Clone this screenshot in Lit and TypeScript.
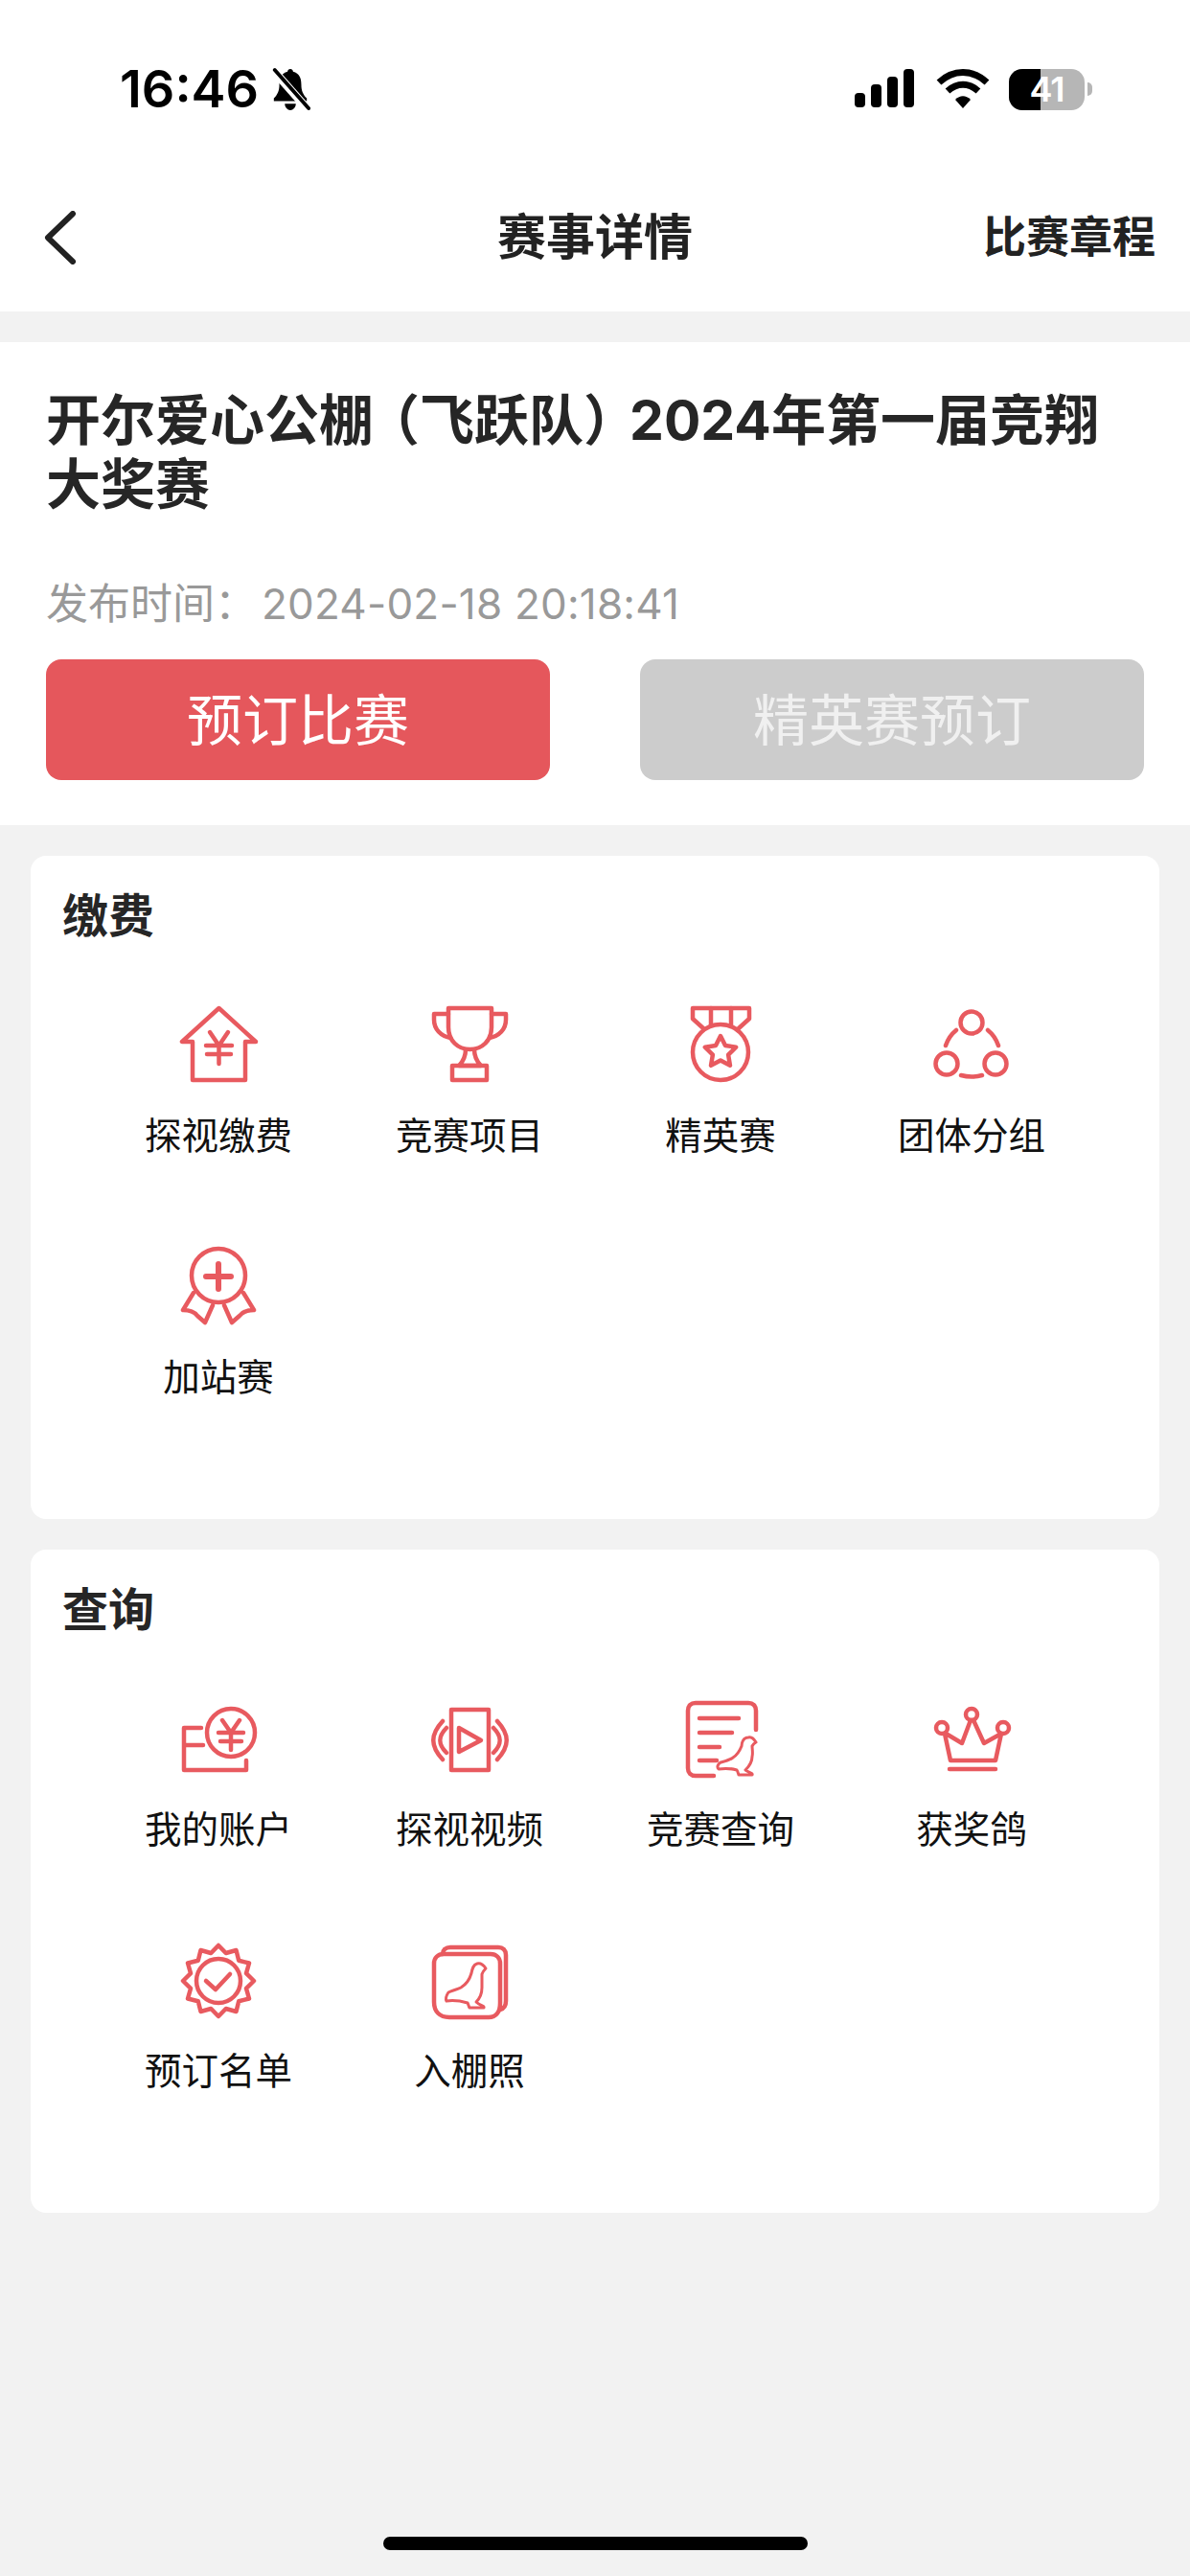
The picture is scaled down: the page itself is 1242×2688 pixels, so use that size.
import { LitElement, html, css, svg } from "lit";
import { customElement } from "lit/decorators.js";

const pigeonDoc = "M79 46C77 43 75 40 71 41C66 41 64 46 64 50C62 55 60 59 55 62C51 65 46 66 42 67C39 69 38 72 40 74C46 73 52 73 59 75C60 76 60 78 61 80H75C76 78 72 78 68 75C72 71 75 66 75 61C76 57 75 53 75 50C76 48 77 47 79 46Z";
const pigeonPhoto = "M59 30C57 27 54 24 50 25C46 26 45 30 44 35C42 42 38 47 33 50C29 52 24 53 20 55C18 58 17 62 18 64C25 63 33 64 40 66C41 68 41 69 42 71H57C58 69 53 69 49 65C53 61 55 55 55 50C55 45 55 40 55 36C56 33 58 31 59 30Z";

function burst(cx: number, cy: number, ro: number, ri: number, n: number, start = -90) {
  const pts: string[] = [];
  for (let i = 0; i < n * 2; i++) {
    const r = i % 2 === 0 ? ro : ri;
    const a = ((start + (i * 180) / n) * Math.PI) / 180;
    pts.push(`${(cx + r * Math.cos(a)).toFixed(1)},${(cy + r * Math.sin(a)).toFixed(1)}`);
  }
  return pts.join(" ");
}

const icons: Record<string, unknown> = {
  house: svg`<path d="M15 39V79H70V39H81L42.500 4 4 39Z"/><path d="M33 29l9.500 14L52 29M29 43H56M30 52H55M42.500 43V62"/>`,
  trophy: svg`<path d="M20 4H65V24C65 38 55 47 42.500 47S20 38 20 24Z"/><path d="M20 10H5V16C5 26 12 33 22 35M65 10H80V16C80 26 73 33 63 35"/><path d="M38 47C38 54 35 60 31 64H54C50 60 47 54 47 47"/><rect x="24" y="64" width="36" height="15"/>`,
  medal: svg`<path d="M24 25L13 15V4H72V15L61 25"/><path d="M32 4V21M53 4V21"/><circle cx="42" cy="50" r="29"/><polygon points="${burst(42, 50, 17, 8.5, 5)}"/>`,
  group: svg`<circle cx="42" cy="19" r="11.500"/><circle cx="16" cy="62" r="11.500"/><circle cx="67" cy="62" r="11.500"/><path d="M26 27C21 31 17 37 15 43M59 27C64 31 68 37 70 43M31 74C38 76 46 76 53 74"/>`,
  award: svg`<circle cx="42" cy="31" r="28"/><path class="thick" d="M42 19V45M29 32H55"/><path d="M16 49L5 67C11 67 17 69 20 73L28 80L36 62M68 49L79 67C73 67 67 69 64 73L56 80L48 62"/>`,
  account: svg`<circle cx="55" cy="36" r="25"/><path d="M46 23L55 36L64 23M42 36H68M44 45H66M55 36V54"/><path d="M24 31H6V75H71V65M6 49H26"/>`,
  video: svg`<rect x="23" y="12" width="39" height="63"/><path d="M31 31L54 44L31 56Z"/><path d="M18 31C9 40 9 48 18 57M14 24C1 38 1 50 14 64M67 31C76 40 76 48 67 57M71 24C84 38 84 50 71 64"/>`,
  doc: svg`<path d="M35 81H16C11 81 8 78 8 73V13C8 8 11 5 16 5H71C76 5 79 8 79 13V33"/><path d="M20 21H61M20 36H54M20 51H41M20 65H38"/><path class="thin" d="${pigeonDoc}"/>`,
  crown: svg`<circle cx="42" cy="17" r="6"/><circle cx="11" cy="31" r="6"/><circle cx="75" cy="31" r="6"/><path d="M14 37L20 65H67L73 37L55 47L44 23H41L32 47L17 38"/><path d="M19 74H67"/>`,
  badge: svg`<polygon points="${burst(42, 43, 37, 30, 12)}"/><circle cx="42" cy="43" r="23"/><path d="M29 43L39 52L54 36"/>`,
  photo: svg`<path d="M5 25C5 19 9 15 15 15H64C70 15 74 19 74 25V66C74 75 70 81 62 81H21C11 81 5 75 5 65Z"/><path d="M14 15C14 11 17 8 22 8H72C77 8 80 11 80 16V64C80 69 78 72 74 73"/><path class="thin" d="${pigeonPhoto}"/>`,
};

type Tile = { icon: string; label: string };
const pay: Tile[] = [
  { icon: "house", label: "探视缴费" },
  { icon: "trophy", label: "竞赛项目" },
  { icon: "medal", label: "精英赛" },
  { icon: "group", label: "团体分组" },
  { icon: "award", label: "加站赛" },
];
const query: Tile[] = [
  { icon: "account", label: "我的账户" },
  { icon: "video", label: "探视视频" },
  { icon: "doc", label: "竞赛查询" },
  { icon: "crown", label: "获奖鸽" },
  { icon: "badge", label: "预订名单" },
  { icon: "photo", label: "入棚照" },
];

@customElement("app-root")
export class AppRoot extends LitElement {
  static styles = css`
    :host {
      display: block;
      position: relative;
      width: 1242px;
      height: 2688px;
      overflow: hidden;
      background: #f2f2f2;
      font-family: "Inter", "Noto Sans CJK SC", sans-serif;
      color: #222;
    }
    .top { background: #fff; height: 325px; display: flex; flex-direction: column; }
    .status {
      height: 165px;
      display: flex;
      justify-content: space-between;
      align-items: flex-start;
      padding: 67px 102px 0 125px;
      box-sizing: border-box;
    }
    .status-left, .status-right { display: flex; align-items: center; height: 52px; }
    .status-left { gap: 12px; }
    .time { font-size: 54px; font-weight: 600; line-height: 52px; color: #000; }
    .status-right { gap: 20px; }
    .status svg { display: block; }
    .status svg.signal { margin-right: 3px; }
    .battery {
      position: relative;
      width: 79px;
      height: 43px;
      border-radius: 14px;
      overflow: hidden;
      background: #b6b6b6;
    }
    .battery-fill { width: 33px; height: 100%; background: #000; }
    .battery-num {
      position: absolute;
      inset: 0;
      display: flex;
      align-items: center;
      justify-content: center;
      color: #fff;
      font-size: 36px;
      font-weight: 600;
      letter-spacing: -1px;
    }
    .battery-wrap { display: flex; align-items: center; gap: 3px; }
    .nub { width: 5px; height: 14px; border-radius: 0 5px 5px 0; background: #b6b6b6; }

    .nav {
      height: 160px;
      box-sizing: border-box;
      display: grid;
      grid-template-columns: 1fr auto 1fr;
      align-items: center;
      padding: 5px 36px 0;
    }
    .nav svg { display: block; margin-left: 10px; fill: none; stroke: #222; stroke-width: 6; stroke-linecap: round; stroke-linejoin: round; }
    .nav-title { font-size: 51px; font-weight: 700; color: #222; line-height: 60px; }
    .nav-link { font-size: 45px; font-weight: 600; justify-self: end; color: #222; line-height: 60px; }

    .hero {
      margin-top: 32px;
      height: 504px;
      box-sizing: border-box;
      background: #fff;
      padding: 48px 48px 0;
    }
    h1 { margin: 0; font-size: 57px; line-height: 67px; font-weight: 700; color: #262626; height: 134px; }
    .paren-l { margin-left: -9px; }
    .paren-r { margin-right: -9px; }
    .meta { margin-top: 58px; font-size: 44px; line-height: 66px; color: #999; height: 66px; }
    .stamp { margin-left: 5px; letter-spacing: 0.2px; }
    .buttons { margin-top: 25px; display: flex; justify-content: space-between; }
    .btn {
      width: 526px;
      height: 126px;
      box-sizing: border-box;
      padding-bottom: 6px;
      border-radius: 16px;
      display: flex;
      align-items: center;
      justify-content: center;
      font-size: 58px;
      color: #fff;
      background: #e5575c;
    }
    .btn.off { background: #cccccc; color: #f0f0f0; }

    .cards { padding: 32px 32px 0; display: flex; flex-direction: column; gap: 32px; }
    .card {
      background: #fff;
      border-radius: 16px;
      height: 692px;
      box-sizing: border-box;
      padding-top: 30px;
    }
    h2 { margin: 0 0 0 33px; font-size: 48px; line-height: 66px; font-weight: 700; color: #262626; }
    .grid {
      margin-top: 59px;
      padding: 0 65px;
      display: grid;
      grid-template-columns: repeat(4, 1fr);
      grid-auto-rows: 252px;
    }
    .tile { display: flex; flex-direction: column; align-items: center; }
    .tile svg {
      width: 84px;
      height: 84px;
      display: block;
      fill: none;
      stroke: #e85a5f;
      stroke-width: 4.500;
      stroke-linecap: round;
      stroke-linejoin: round;
    }
    .tile svg .thin { stroke-width: 3; }
    .tile svg .thick { stroke-width: 6; }
    .tile span { margin-top: 26px; font-size: 38.500px; line-height: 54px; color: #111; }

    .home {
      position: absolute;
      left: 400px;
      top: 2647px;
      width: 443px;
      height: 14px;
      border-radius: 7px;
      background: #000;
    }
  `;

  private tiles(items: Tile[]) {
    return html`<div class="grid">
      ${items.map(
        (t) => html`<div class="tile">
          <svg viewBox="0 0 84 84">${icons[t.icon]}</svg>
          <span>${t.label}</span>
        </div>`
      )}
    </div>`;
  }

  render() {
    return html`
      <div class="top">
        <div class="status">
          <div class="status-left">
            <span class="time">16:46</span>
            <svg width="42" height="48" viewBox="0 0 44 48">
              <path d="M22 2c-2 0-3 1.500-3 3C12 7 10 12 10 19c0 7-2 11-6 15v3h36v-3c-4-4-6-8-6-15 0-7-2-12-9-14 0-1.500-1-3-3-3Z" fill="#000"/>
              <path d="M16 40h12c0 4-3 7-6 7s-6-3-6-7Z" fill="#000"/>
              <path d="M3 3L41 46" stroke="#fff" stroke-width="9"/>
              <path d="M5 3L42 45" stroke="#000" stroke-width="4" stroke-linecap="round"/>
            </svg>
          </div>
          <div class="status-right">
            <svg class="signal" width="62" height="42" viewBox="0 0 62 42" fill="#000">
              <rect x="0" y="25" width="11" height="15" rx="4"/>
              <rect x="17" y="16" width="11" height="24" rx="4"/>
              <rect x="34" y="8" width="11" height="32" rx="4"/>
              <rect x="51" y="0" width="11" height="40" rx="4"/>
            </svg>
            <svg width="56" height="42" viewBox="0 0 56 42" fill="none" stroke="#000" stroke-width="7">
              <path d="M3 14C18 0 38 0 53 14"/>
              <path d="M12 23C22 14 34 14 44 23"/>
              <path d="M20 32L28 41L36 32C31 27 25 27 20 32Z" fill="#000" stroke="none"/>
            </svg>
            <div class="battery-wrap">
              <div class="battery">
                <div class="battery-fill"></div>
                <div class="battery-num">41</div>
              </div>
              <div class="nub"></div>
            </div>
          </div>
        </div>
        <div class="nav">
          <svg width="34" height="56" viewBox="0 0 34 56"><path d="M30 3L4 28L30 53"/></svg>
          <div class="nav-title">赛事详情</div>
          <div class="nav-link">比赛章程</div>
        </div>
      </div>

      <div class="hero">
        <h1>开尔爱心公棚<span class="paren-l">（</span>飞跃队<span class="paren-r">）</span>2024年第一届竞翔大奖赛</h1>
        <div class="meta">发布时间：<span class="stamp">2024-02-18 20:18:41</span></div>
        <div class="buttons">
          <div class="btn">预订比赛</div>
          <div class="btn off">精英赛预订</div>
        </div>
      </div>

      <div class="cards">
        <div class="card">
          <h2>缴费</h2>
          ${this.tiles(pay)}
        </div>
        <div class="card">
          <h2>查询</h2>
          ${this.tiles(query)}
        </div>
      </div>
      <div class="home"></div>
    `;
  }
}
